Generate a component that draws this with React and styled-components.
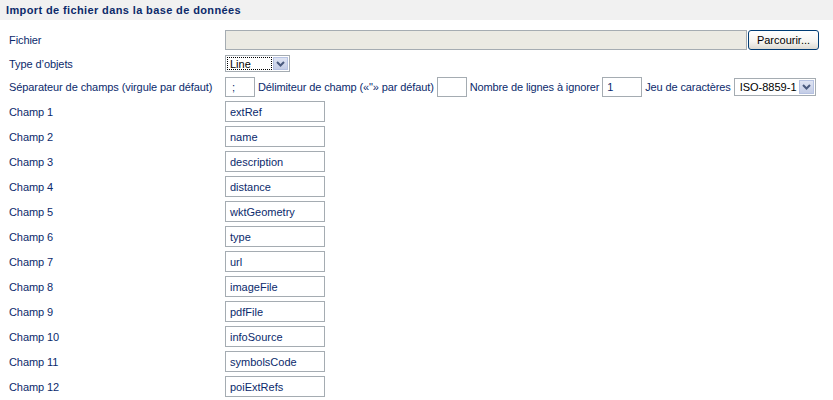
import React from "react";
import styled, { createGlobalStyle } from "styled-components";

const Global = createGlobalStyle`
  html, body { margin: 0; padding: 0; background: #ffffff; }
  body { font-family: "Liberation Sans", Arial, sans-serif; font-size: 11px; color: #0b2a6c; }
`;

const Page = styled.div`
  width: 833px;
  height: 400px;
  background: #fff;
  overflow: hidden;
`;

const Header = styled.div`
  height: 20px;
  background: #f1f1f1;
  display: flex;
  align-items: center;
  padding-left: 6px;
  margin-bottom: 7px;
`;

const Title = styled.h1`
  margin: 0;
  font-size: 11px;
  font-weight: bold;
  color: #0c2a6a;
  letter-spacing: 0.38px;
`;

const Form = styled.div`
  display: flex;
  flex-direction: column;
`;

const Row = styled.div`
  display: grid;
  grid-template-columns: 225px 1fr;
  align-items: center;
  height: ${(p) => p.$h || 25}px;
`;

const Label = styled.span`
  padding-left: 9px;
  color: #0b2a6c;
  white-space: nowrap;
  letter-spacing: -0.08px;
`;

const Inline = styled.div`
  display: flex;
  align-items: center;
  gap: ${(p) => p.$gap ?? 3}px;
  white-space: nowrap;
`;

const Text = styled.span`
  color: #0b2a6c;
  letter-spacing: -0.12px;
`;

const Input = styled.div`
  box-sizing: border-box;
  width: ${(p) => p.$w}px;
  height: ${(p) => p.$h || 21}px;
  border: 1px solid #a5acb2;
  background: ${(p) => (p.$disabled ? "#ebeae3" : "#fff")};
  color: #0b2a6c;
  padding-left: ${(p) => p.$pl ?? 3}px;
  display: flex;
  align-items: center;
  font-size: 11px;
`;

const Browse = styled.div`
  box-sizing: border-box;
  width: 71px;
  height: 20px;
  margin-left: 1px;
  border: 1px solid #003c74;
  border-radius: 3px;
  background: linear-gradient(#ffffff 0%, #f5f4f0 60%, #dcdad2 100%);
  color: #000;
  display: flex;
  align-items: center;
  justify-content: center;
  font-size: 11px;
`;

const Select = styled.div`
  box-sizing: border-box;
  width: ${(p) => p.$w}px;
  height: ${(p) => p.$h || 18}px;
  border: 1px solid #a5acb2;
  background: #fff;
  display: flex;
  align-items: stretch;
  padding: 1px;
`;

const SelectValue = styled.div`
  flex: 1;
  display: flex;
  align-items: center;
  padding-left: ${(p) => (p.$focus ? 2 : 3)}px;
  color: #000;
  font-size: 11px;
  box-sizing: border-box;
  border: ${(p) => (p.$focus ? "1px dotted #000" : "1px solid transparent")};
  margin-right: 1px;
  overflow: hidden;
`;

const SelectButton = styled.div`
  width: 15px;
  flex-shrink: 0;
  box-sizing: border-box;
  border: 1px solid #b6c2e2;
  background: linear-gradient(#dfe4f3, #c4cde6);
  display: flex;
  align-items: center;
  justify-content: center;
`;

const Chevron = () => (
  <svg width="9" height="6" viewBox="0 0 9 6">
    <path d="M1 1 L4.5 4.5 L8 1" fill="none" stroke="#4a5a7e" strokeWidth="2" />
  </svg>
);

const fields = [
  "extRef",
  "name",
  "description",
  "distance",
  "wktGeometry",
  "type",
  "url",
  "imageFile",
  "pdfFile",
  "infoSource",
  "symbolsCode",
  "poiExtRefs",
];

export default function App() {
  return (
    <Page>
      <Global />
      <Header>
        <Title>Import de fichier dans la base de données</Title>
      </Header>
      <Form>
        <Row $h={25}>
          <Label>Fichier</Label>
          <Inline $gap={0}>
            <Input $w={522} $h={20} $disabled />
            <Browse>Parcourir...</Browse>
          </Inline>
        </Row>
        <Row $h={23}>
          <Label>Type d’objets</Label>
          <Inline>
            <Select $w={65} $h={17}>
              <SelectValue $focus>Line</SelectValue>
              <SelectButton>
                <Chevron />
              </SelectButton>
            </Select>
          </Inline>
        </Row>
        <Row $h={24}>
          <Label>Séparateur de champs (virgule par défaut)</Label>
          <Inline>
            <Input $w={30} $h={20} $pl={6}>;</Input>
            <Text>Délimiteur de champ («"» par défaut)</Text>
            <Input $w={30} $h={20} />
            <Text>Nombre de lignes à ignorer</Text>
            <Input $w={40} $h={20} $pl={4}>1</Input>
            <Text>Jeu de caractères</Text>
            <Select $w={82} $h={18}>
              <SelectValue>ISO-8859-1</SelectValue>
              <SelectButton>
                <Chevron />
              </SelectButton>
            </Select>
          </Inline>
        </Row>
        {fields.map((f, i) => (
          <Row key={f} $h={25}>
            <Label>Champ {i + 1}</Label>
            <Inline>
              <Input $w={100} $h={21} $pl={4}>{f}</Input>
            </Inline>
          </Row>
        ))}
      </Form>
    </Page>
  );
}
